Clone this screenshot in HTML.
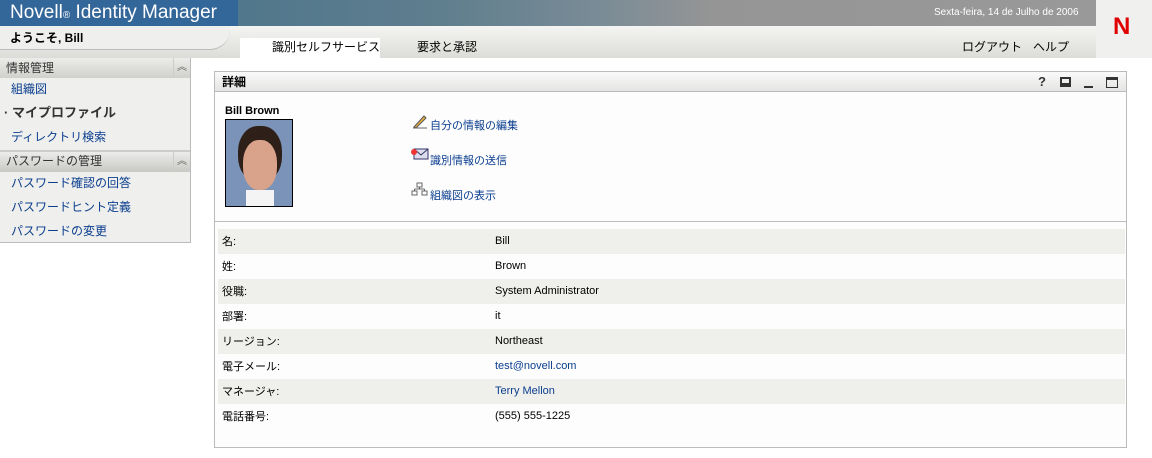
<!DOCTYPE html><html><head><meta charset="utf-8"><style>
*{margin:0;padding:0;box-sizing:border-box}
body{width:1152px;height:458px;background:#fff;font-family:"Liberation Sans","Noto Sans CJK JP",sans-serif;font-size:12px;position:relative;overflow:hidden;color:#000}
.a{position:absolute;white-space:nowrap;line-height:14px}
.lk{color:#0b3e8f}
.l{left:222px;font-size:11px}
.v{left:495px;font-size:11px}
</style></head><body>
<div class="a" style="left:0;top:0;width:1096px;height:26px;background:linear-gradient(90deg,#3f6e8a 0%,#5f7e8e 40%,#7a8c96 55%,#959595 65%,#999 100%)"></div>
<div class="a" style="left:0;top:0;width:238px;height:26px;background:#336699"></div>
<div class="a" style="left:10px;top:3px;color:#fff;font-size:19px;line-height:20px">Novell<span style="font-size:10px">®</span> Identity Manager</div>
<div class="a" style="left:934px;top:6px;color:#fff;font-size:10px">Sexta-feira, 14 de Julho de 2006</div>
<div class="a" style="left:1096px;top:0;width:56px;height:58px;background:#f0f0ee"></div>
<div class="a" style="left:1113px;top:15px;color:#e00000;font-size:24px;font-weight:bold;line-height:24px">N</div>
<div class="a" style="left:0;top:26px;width:1096px;height:32px;background:linear-gradient(#f4f4f2,#dcdcd8)"></div>
<div class="a" style="left:0;top:26px;width:230px;height:24px;background:#efefed;border-bottom:1px solid #bbb;border-bottom-right-radius:20px"></div>
<div class="a" style="left:10px;top:31px;font-size:12px;font-weight:bold">ようこそ, Bill</div>
<div class="a" style="left:240px;top:38px;width:140px;height:20px;background:#fff"></div>
<div class="a" style="left:272px;top:40px;font-size:12px">識別セルフサービス</div>
<div class="a" style="left:417px;top:40px;font-size:12px">要求と承認</div>
<div class="a" style="left:962px;top:40px;font-size:12px">ログアウト</div>
<div class="a" style="left:1033px;top:40px;font-size:12px">ヘルプ</div>
<div class="a" style="left:0;top:58px;width:191px;height:185px;background:#efefed;border-right:1px solid #bbb;border-bottom:1px solid #bbb"></div>
<div class="a" style="left:0;top:58px;width:190px;height:20px;background:linear-gradient(#ececea,#d0d0cc)"></div>
<div class="a" style="left:6px;top:61px;color:#333">情報管理</div>
<div class="a" style="left:173px;top:58px;width:17px;height:20px;border-left:1px solid #ccc;color:#666;font-size:10px;text-align:center;line-height:20px">︽</div>
<div class="a lk" style="left:11px;top:82px">組織図</div>
<div class="a" style="left:4px;top:106px;font-size:13px;font-weight:bold;color:#333">· マイプロファイル</div>
<div class="a lk" style="left:11px;top:130px">ディレクトリ検索</div>
<div class="a" style="left:0;top:150px;width:190px;height:22px;background:linear-gradient(#ececea,#c8c8c4);border-top:2px solid #ccc"></div>
<div class="a" style="left:6px;top:154px;color:#333">パスワードの管理</div>
<div class="a" style="left:173px;top:152px;width:17px;height:20px;border-left:1px solid #ccc;color:#666;font-size:10px;text-align:center;line-height:20px">︽</div>
<div class="a lk" style="left:11px;top:176px">パスワード確認の回答</div>
<div class="a lk" style="left:11px;top:200px">パスワードヒント定義</div>
<div class="a lk" style="left:11px;top:224px">パスワードの変更</div>
<div class="a" style="left:214px;top:71px;width:913px;height:377px;border:1px solid #bbb;background:#fdfdfd"></div>
<div class="a" style="left:215px;top:72px;width:911px;height:20px;background:linear-gradient(#fafafa,#e4e4e2);border-bottom:1px solid #bbb"></div>
<div class="a" style="left:222px;top:75px;font-weight:bold">詳細</div>
<div class="a" style="left:1038px;top:75px;font-weight:bold;font-size:13px;color:#333">?</div>
<div class="a" style="left:1060px;top:77px;width:11px;height:10px;border:2px solid #333;border-bottom-width:4px"></div>
<div class="a" style="left:1084px;top:86px;width:9px;height:2px;background:#333"></div>
<div class="a" style="left:1106px;top:77px;width:12px;height:11px;border:1px solid #333;border-top-width:3px"></div>
<div class="a" style="left:225px;top:104px;font-weight:bold;font-size:11px">Bill Brown</div>
<div class="a" style="left:225px;top:119px;width:68px;height:88px;border:1px solid #000;background:#7b93b8;overflow:hidden">
<div class="a" style="left:12px;top:6px;width:44px;height:56px;border-radius:45%;background:#2e2018"></div>
<div class="a" style="left:17px;top:20px;width:34px;height:50px;border-radius:45%;background:#d9a28a"></div>
<div class="a" style="left:20px;top:70px;width:28px;height:18px;background:#f4f4f4"></div>
</div>
<svg class="a" style="left:412px;top:113px" width="16" height="16"><path d="M2 14 L12 3 L14 5 L4 15 Z" fill="#e8b040" stroke="#555" stroke-width="1"/><line x1="1" y1="15" x2="15" y2="15" stroke="#666"/></svg>
<div class="a lk" style="left:430px;top:119px;font-size:11px">自分の情報の編集</div>
<svg class="a" style="left:410px;top:147px" width="20" height="14"><rect x="4" y="2" width="14" height="10" fill="#dde" stroke="#336"/><path d="M4 2 L11 8 L18 2" fill="none" stroke="#336"/><circle cx="4" cy="5" r="3" fill="#e33"/></svg>
<div class="a lk" style="left:430px;top:154px;font-size:11px">識別情報の送信</div>
<svg class="a" style="left:411px;top:182px" width="18" height="14"><rect x="6" y="1" width="5" height="4" fill="none" stroke="#666"/><rect x="1" y="9" width="5" height="4" fill="none" stroke="#666"/><rect x="11" y="9" width="5" height="4" fill="none" stroke="#666"/><path d="M8.5 5 V7 M3.5 7 H13.5 M3.5 7 V9 M13.5 7 V9" stroke="#666" fill="none"/></svg>
<div class="a lk" style="left:430px;top:189px;font-size:11px">組織図の表示</div>
<div class="a" style="left:215px;top:221px;width:911px;height:1px;background:#bbb"></div>
<div class="a" style="left:218px;top:229px;width:907px;height:25px;background:#efefeb"></div>
<div class="a" style="left:218px;top:279px;width:907px;height:25px;background:#efefeb"></div>
<div class="a" style="left:218px;top:329px;width:907px;height:25px;background:#efefeb"></div>
<div class="a" style="left:218px;top:379px;width:907px;height:25px;background:#efefeb"></div>
<div class="a l" style="top:235px">名:</div>
<div class="a l" style="top:260px">姓:</div>
<div class="a l" style="top:285px">役職:</div>
<div class="a l" style="top:310px">部署:</div>
<div class="a l" style="top:335px">リージョン:</div>
<div class="a l" style="top:360px">電子メール:</div>
<div class="a l" style="top:385px">マネージャ:</div>
<div class="a l" style="top:410px">電話番号:</div>
<div class="a v" style="top:234px">Bill</div>
<div class="a v" style="top:259px">Brown</div>
<div class="a v" style="top:284px">System Administrator</div>
<div class="a v" style="top:309px">it</div>
<div class="a v" style="top:334px">Northeast</div>
<div class="a v lk" style="top:359px">test@novell.com</div>
<div class="a v lk" style="top:384px">Terry Mellon</div>
<div class="a v" style="top:409px">(555) 555-1225</div>
</body></html>
